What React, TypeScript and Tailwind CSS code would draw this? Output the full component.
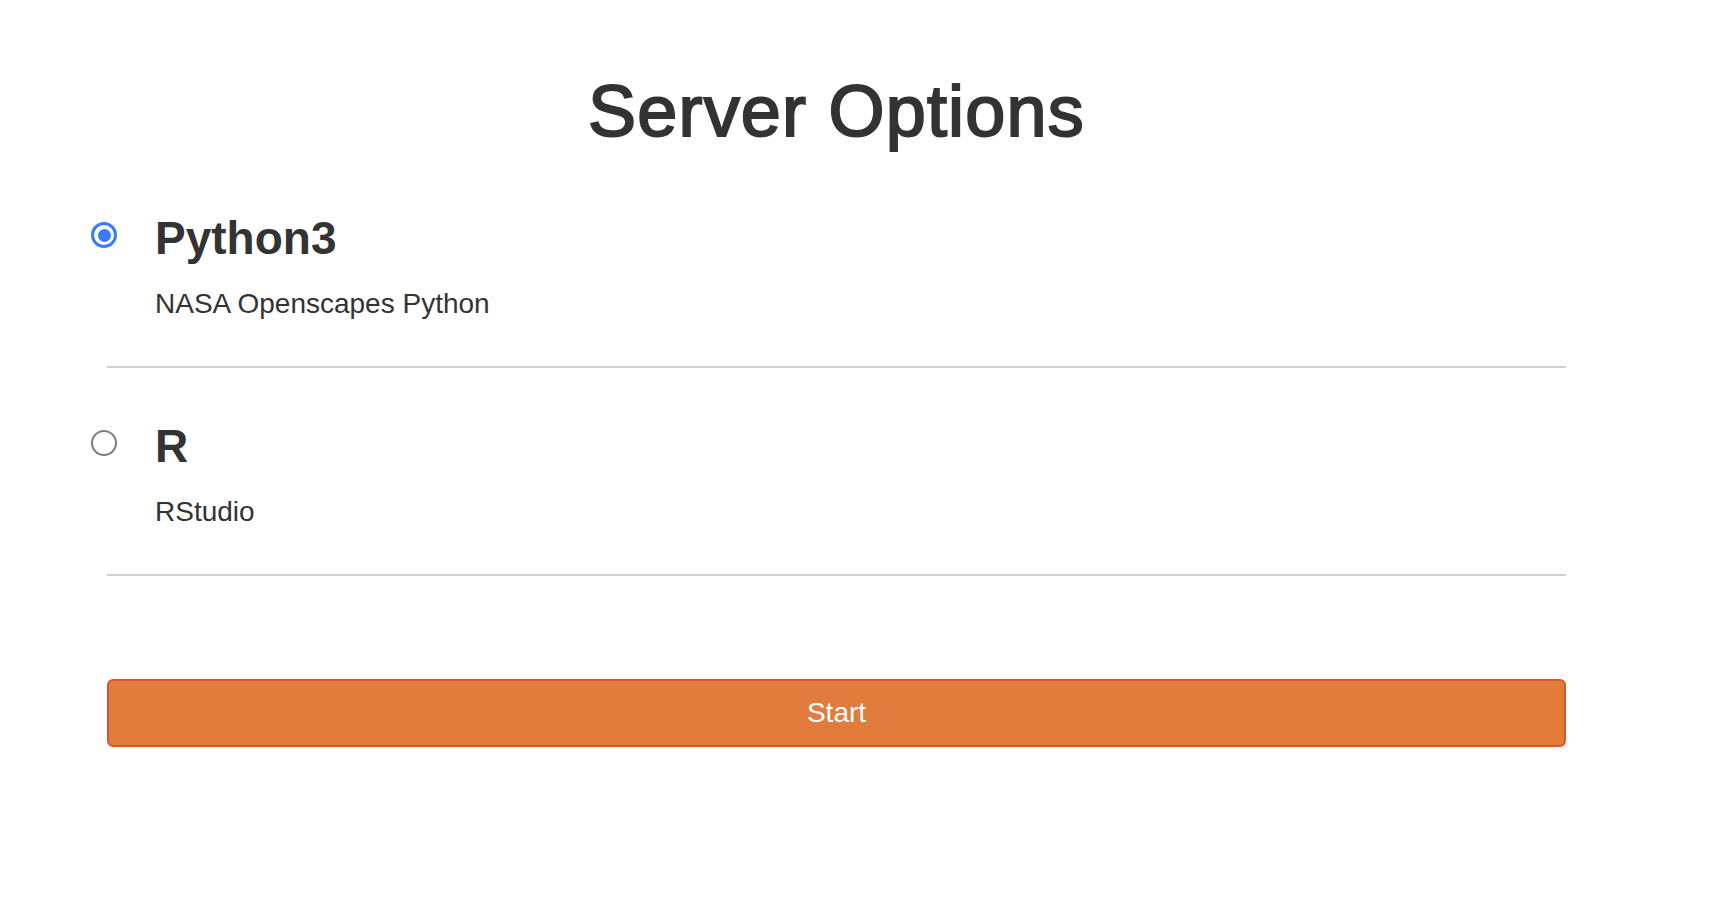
import React from "react";

const font = { fontFamily: '"Liberation Sans", "Helvetica Neue", Helvetica, Arial, sans-serif' };

function Radio({ checked }: { checked: boolean }) {
  if (checked) {
    return (
      <div className="-ml-4 mt-[10px] flex h-[26px] w-[26px] shrink-0 items-center justify-center rounded-full border-[3px] border-[#3a7cf6] bg-white">
        <div className="h-[13px] w-[13px] rounded-full bg-[#3a7cf6]" />
      </div>
    );
  }
  return <div className="-ml-4 mt-[10px] h-[26px] w-[26px] shrink-0 rounded-full border-2 border-[#7d7d7d] bg-white" />;
}

function Option({ title, desc, checked }: { title: string; desc: string; checked: boolean }) {
  return (
    <label className="flex border-b-2 border-[#d0d0d0] pt-[52px] pb-[42px]">
      <Radio checked={checked} />
      <div className="ml-[38px] flex flex-col">
        <div className="h-[52px] text-[46px] leading-[52px] font-bold text-[#333333]">{title}</div>
        <div className="mt-[20px] h-[40px] text-[28px] leading-[40px] text-[#333333]">{desc}</div>
      </div>
    </label>
  );
}

export default function App() {
  return (
    <div className="flex h-[902px] w-full flex-col overflow-hidden bg-white pt-[71px]" style={font}>
      <div className="ml-[107px] w-[1459px]">
        <h1 className="mb-[9px] h-[80px] text-center text-[72px] leading-[80px] font-normal tracking-[1.2px] text-[#333333] [-webkit-text-stroke:2px_#333333]">
          Server Options
        </h1>
        <Option title="Python3" desc="NASA Openscapes Python" checked={true} />
        <Option title="R" desc="RStudio" checked={false} />
        <button className="mt-[103px] flex h-[68px] w-full items-center justify-center rounded-[6px] border-2 border-[#d6582b] bg-[#e17c3c] text-[28px] leading-[32px] text-white">
          Start
        </button>
      </div>
    </div>
  );
}
